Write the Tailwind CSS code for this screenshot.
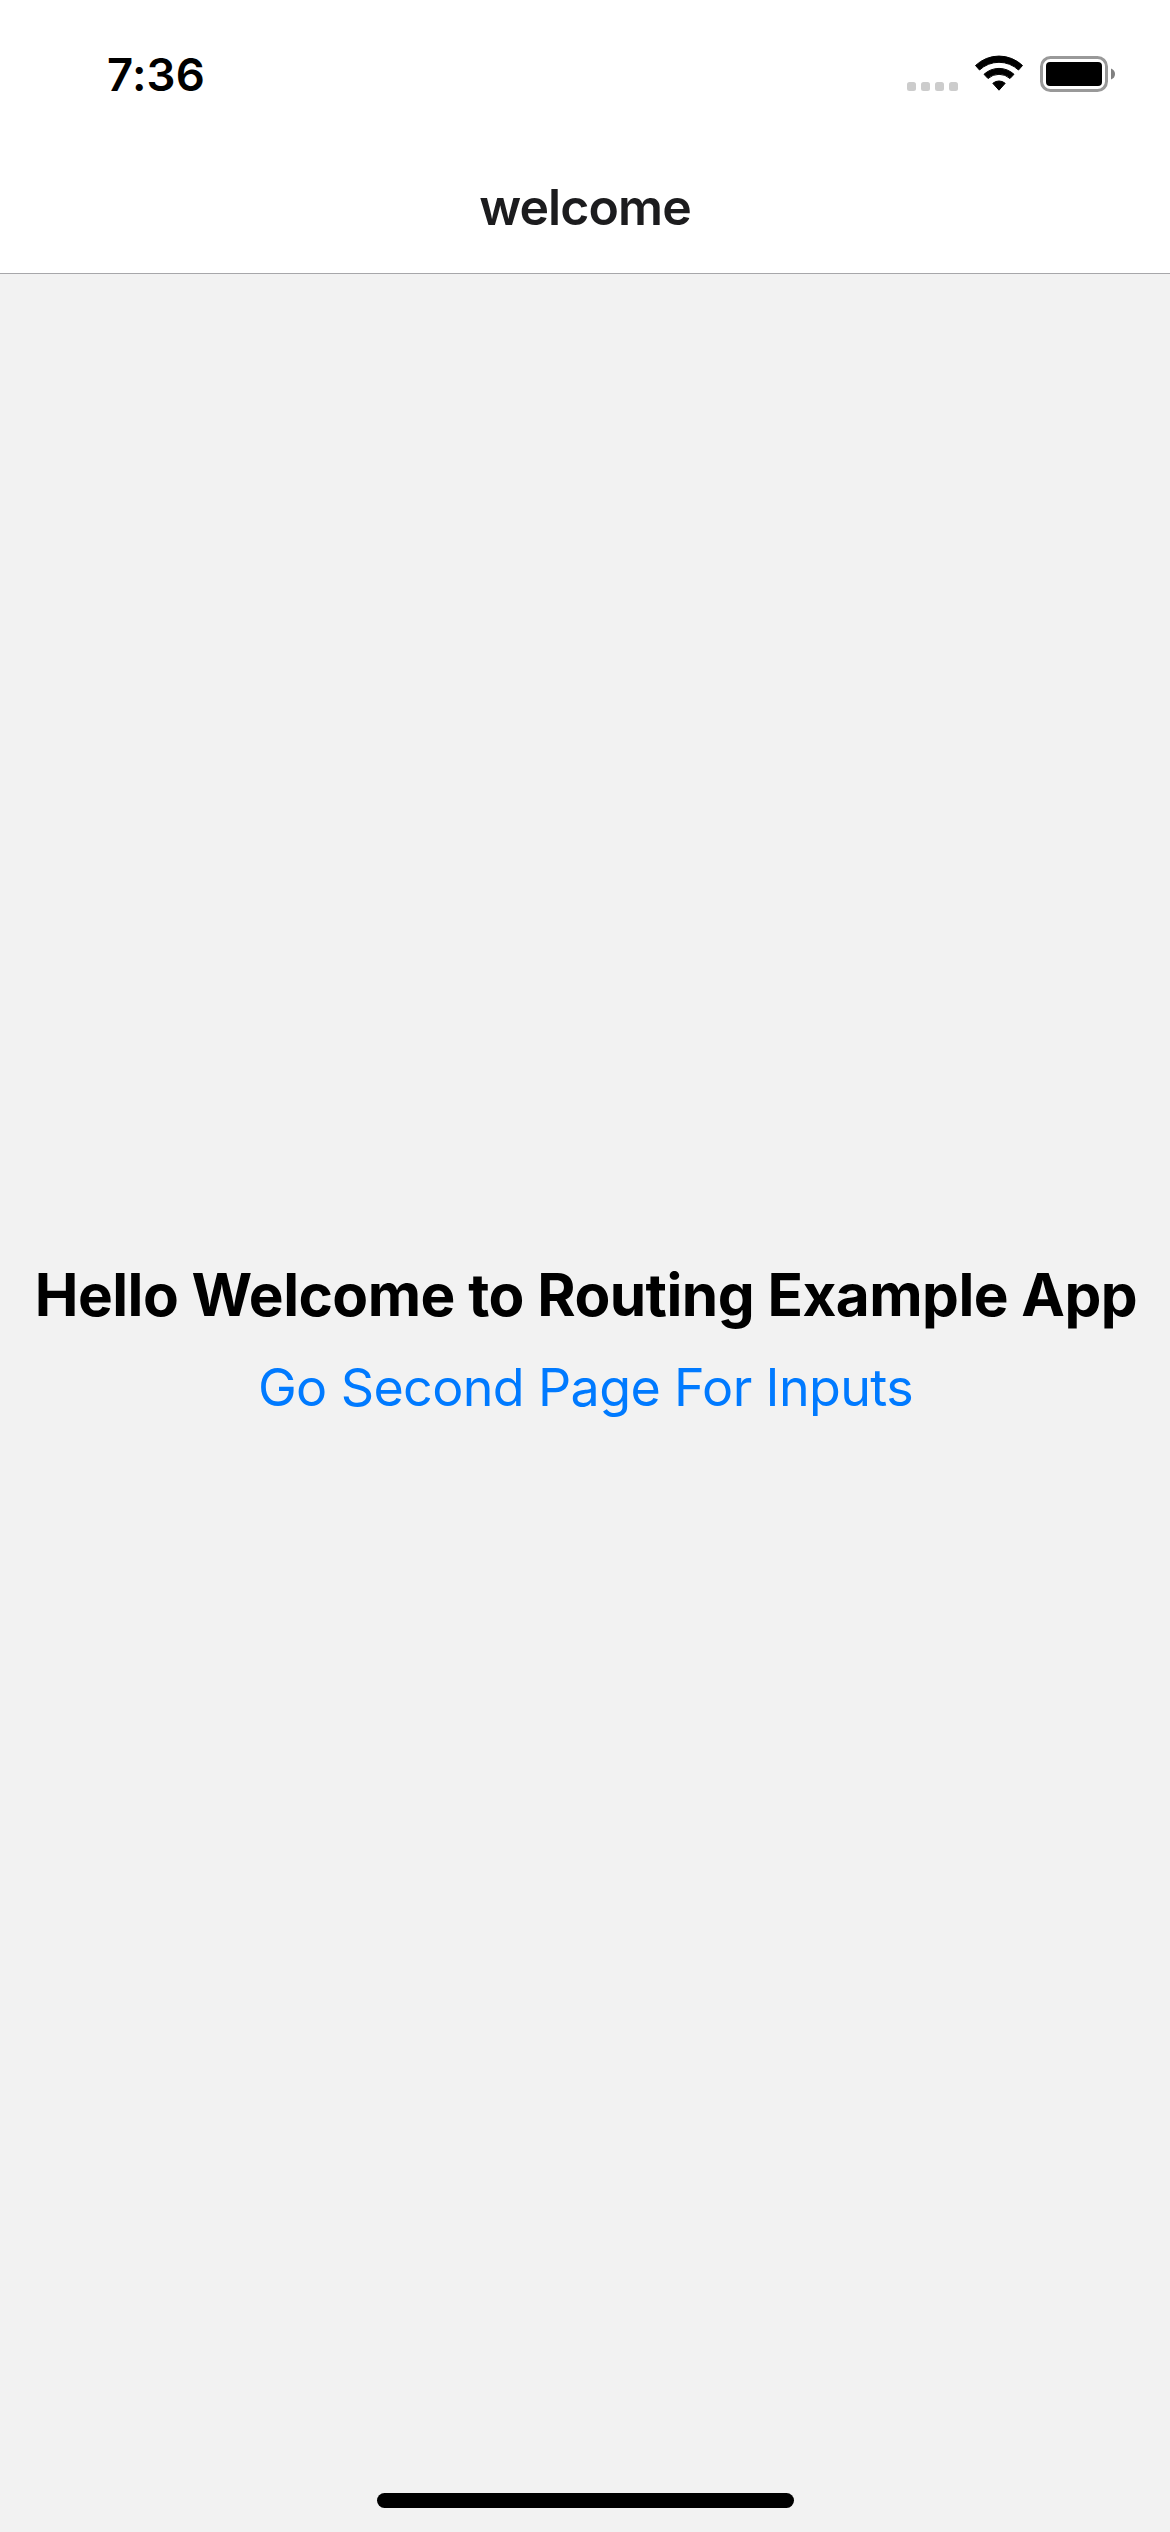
<!DOCTYPE html>
<html lang="en"><head><meta charset="utf-8"><title>welcome</title>
<script src="https://cdn.jsdelivr.net/npm/@tailwindcss/browser@4"></script></head>
<body class="font-['Inter',sans-serif]">
<div class="w-[1170px] h-[2532px] flex flex-col bg-[#f2f2f2] overflow-hidden">
<header class="h-[274px] shrink-0 bg-white border-b border-[#a7a7aa] flex flex-col">
<div class="h-[141px] flex justify-between pl-[107px] pr-[54px] pt-[48px]">
<span class="text-[45.5px] leading-[53px] font-semibold tracking-[0.2px] whitespace-nowrap">7:36</span>
<svg class="w-[210px] h-[50px]" viewBox="906 48 210 50">
<g fill="#ccc"><rect x="907" y="82" width="9" height="9" rx="2.5"/><rect x="921" y="82" width="9" height="9" rx="2.5"/><rect x="935" y="82" width="9" height="9" rx="2.5"/><rect x="949" y="82" width="9" height="9" rx="2.5"/></g>
<g stroke="#000" stroke-width="1" stroke-linejoin="round"><path d="M975.500 65.500A34 34 0 0 1 1022.500 65.500L1018.500 70A28.500 28.500 0 0 0 979.500 70Z"/><path d="M984 74.300A22 22 0 0 1 1014 74.300L1010 78.500A16.500 16.500 0 0 0 988 78.500Z"/><path d="M992.800 83.300A9.500 9.500 0 0 1 1005.200 83.300L999 90.200Z"/></g>
<rect x="1041.500" y="57.500" width="65" height="33" rx="9" fill="none" stroke="#999" stroke-width="3"/><rect x="1046" y="62" width="56" height="24" rx="4"/><path d="M1111 68.500Q1115 70 1115 74T1111 79.500Z" fill="#808080"/></svg>
</div>
<h1 class="text-center text-[50px] leading-[132px] font-semibold tracking-[-0.9px] text-[#1c1c1e]">welcome</h1>
</header>
<main class="flex-1 flex flex-col items-center pt-[982px] whitespace-nowrap">
<h2 class="text-[58.5px] leading-[78px] font-bold tracking-[-0.53px] pl-[2px]">Hello Welcome to Routing Example App</h2>
<a class="mt-[18px] text-[52px] leading-[72px] tracking-[-0.63px] pl-px text-[#007aff]">Go Second Page For Inputs</a>
</main>
<footer class="h-[39px] flex justify-center pl-px"><div class="w-[417px] h-[15px] rounded-full bg-black"></div></footer>
</div></body></html>
